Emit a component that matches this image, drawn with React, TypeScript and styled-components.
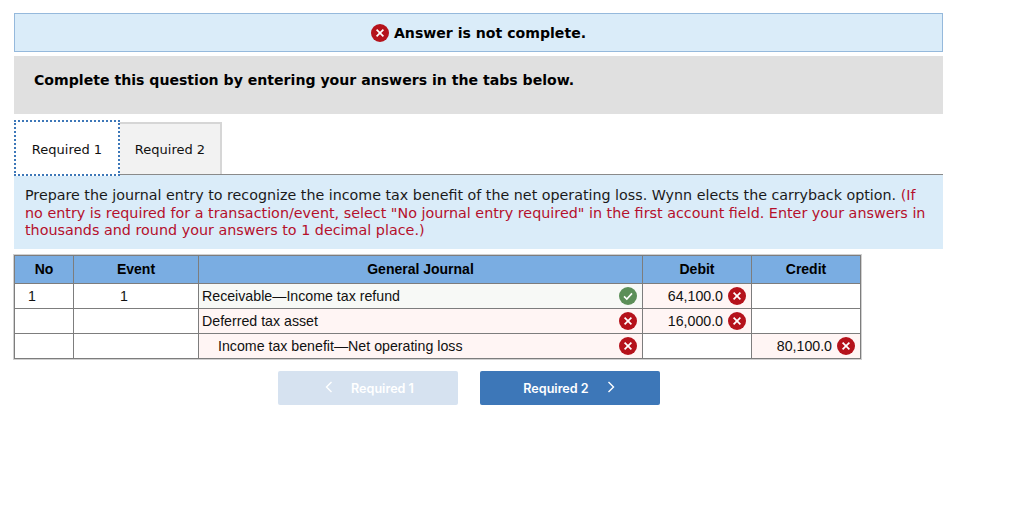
import { createGlobalStyle } from 'styled-components';
import styled from 'styled-components';

const GlobalStyle = createGlobalStyle`
  html, body { margin: 0; padding: 0; background: #fff; }
  body { font-family: "DejaVu Sans", Verdana, sans-serif; color: #000; }
`;

const Page = styled.div`
  width: 1024px;
  height: 508px;
  box-sizing: border-box;
  padding: 13px 0 0 14px;
  overflow: hidden;
`;

const Column = styled.div`
  width: 929px;
`;

const Alert = styled.div`
  height: 39px;
  box-sizing: border-box;
  background: #daecf9;
  border: 1px solid #95b9dc;
  display: flex;
  align-items: center;
  justify-content: center;
  gap: 5px;
  font-size: 14.1px;
  font-weight: 700;
`;

const Notice = styled.div`
  margin-top: 4px;
  height: 58px;
  box-sizing: border-box;
  background: #e0e0e0;
  padding: 15px 20px;
  font-size: 14.1px;
  font-weight: 700;
  line-height: 18px;
`;

const Tabs = styled.div`
  margin-top: 8px;
  height: 52px;
  display: flex;
  align-items: flex-end;
  border-bottom: 1px solid #8a8a8a;
`;

const Tab = styled.div<{ $active?: boolean }>`
  flex: none;
  box-sizing: border-box;
  display: flex;
  align-items: center;
  justify-content: center;
  font-size: 13px;
  color: #111;
  ${({ $active }) =>
    $active
      ? `
    width: 106px;
    height: 56px;
    margin-bottom: -2px;
    padding-top: 2px;
    background: #fff;
    border: 2px dotted #3d77b8;
    position: relative;
    z-index: 1;
  `
      : `
    width: 102px;
    height: 52px;
    background: #f2f2f2;
    border: 2px solid #d6d6d6;
    border-bottom: 0;
    border-left: 0;
  `}
`;

const Instructions = styled.div`
  background: #daecf9;
  height: 74px;
  box-sizing: border-box;
  padding: 12px 11px 0;
  font-size: 14.27px;
  line-height: 17.5px;
  color: #1a1a1a;
`;

const Hint = styled.span`
  color: #b5102c;
  font-size: 14.34px;
`;

const JournalTable = styled.table`
  margin-top: 6px;
  width: 846px;
  table-layout: fixed;
  border-collapse: collapse;
  font-family: "Liberation Sans", Arial, sans-serif;
  font-size: 14.2px;
  color: #111;
  outline: 1px solid #d0d0d0;
`;

const Head = styled.th<{ $w: number }>`
  width: ${({ $w }) => $w}px;
  height: 28px;
  padding: 0 0 1px;
  box-sizing: border-box;
  background: #7aade2;
  border: 1px solid #7d7d7d;
  font-weight: 700;
  font-size: 14px;
  color: #000;
  text-align: center;
`;

const Cell = styled.td<{ $tone?: 'ok' | 'bad' }>`
  height: 25px;
  padding: 0;
  box-sizing: border-box;
  border: 1px solid #7d7d7d;
  background: ${({ $tone }) =>
    $tone === 'ok' ? '#f7f9f6' : $tone === 'bad' ? '#fff5f4' : '#fff'};
`;

const IndexValue = styled.div<{ $pad: number }>`
  padding-left: ${({ $pad }) => $pad}px;
`;

const AccountRow = styled.div<{ $indent?: boolean }>`
  display: flex;
  align-items: center;
  justify-content: space-between;
  padding: 0 5px 0 ${({ $indent }) => ($indent ? 19 : 3)}px;
`;

const AmountRow = styled.div`
  display: flex;
  align-items: center;
  justify-content: flex-end;
  gap: 5px;
  padding-right: 5px;
`;

const Buttons = styled.div`
  margin: 12px 0 0 264px;
  display: flex;
  gap: 22px;
`;

const NavButton = styled.div<{ $disabled?: boolean }>`
  width: 180px;
  height: 34px;
  box-sizing: border-box;
  border-radius: 2px;
  display: flex;
  align-items: center;
  justify-content: center;
  padding: ${({ $disabled }) => ($disabled ? '0 0 0 3px' : '0 2px 0 0')};
  font-family: Inter, "Liberation Sans", sans-serif;
  font-size: 12.6px;
  font-weight: 600;
  color: #fff;
  background: ${({ $disabled }) => ($disabled ? '#d6e2f0' : '#3d77b8')};
`;

const Chevron = styled.svg<{ $side: 'left' | 'right' }>`
  width: 8px;
  height: 12px;
  margin: ${({ $side }) => ($side === 'left' ? '-2px 18px 0 0' : '-2px 0 0 18px')};
  fill: none;
  stroke: currentColor;
  stroke-width: 1.4;
`;

function StatusIcon({ ok }: { ok?: boolean }) {
  return (
    <svg width="18" height="18" viewBox="0 0 18 18" style={{ flex: 'none' }}>
      <circle cx="9" cy="9" r="9" fill={ok ? '#5b8f58' : '#b5121b'} />
      {ok ? (
        <path d="M5 9.4 L7.8 12 L13 6.4" fill="none" stroke="#fff" strokeWidth="1.6" />
      ) : (
        <path d="M5.6 5.6 L12.4 12.4 M12.4 5.6 L5.6 12.4" fill="none" stroke="#fff" strokeWidth="1.7" />
      )}
    </svg>
  );
}

const rows = [
  { no: '1', event: '1', account: 'Receivable—Income tax refund', accountOk: true, debit: '64,100.0', credit: '' },
  { no: '', event: '', account: 'Deferred tax asset', accountOk: false, debit: '16,000.0', credit: '' },
  { no: '', event: '', account: 'Income tax benefit—Net operating loss', accountOk: false, indent: true, debit: '', credit: '80,100.0' },
];

export default function App() {
  return (
    <Page>
      <GlobalStyle />
      <Column>
        <Alert>
          <StatusIcon />
          Answer is not complete.
        </Alert>
        <Notice>Complete this question by entering your answers in the tabs below.</Notice>
        <Tabs>
          <Tab $active>Required 1</Tab>
          <Tab>Required 2</Tab>
        </Tabs>
        <Instructions>
          Prepare the journal entry to recognize the income tax benefit of the net operating loss. Wynn elects the carryback option.{' '}
          <Hint>
            (If no entry is required for a transaction/event, select "No journal entry required" in the first account field. Enter your answers in thousands and round your answers to 1 decimal place.)
          </Hint>
        </Instructions>
        <JournalTable>
          <thead>
            <tr>
              <Head $w={59}>No</Head>
              <Head $w={125}>Event</Head>
              <Head $w={444}>General Journal</Head>
              <Head $w={109}>Debit</Head>
              <Head $w={109}>Credit</Head>
            </tr>
          </thead>
          <tbody>
            {rows.map((row) => (
              <tr key={row.account}>
                <Cell><IndexValue $pad={13}>{row.no}</IndexValue></Cell>
                <Cell><IndexValue $pad={46}>{row.event}</IndexValue></Cell>
                <Cell $tone={row.accountOk ? 'ok' : 'bad'}>
                  <AccountRow $indent={row.indent}>
                    {row.account}
                    <StatusIcon ok={row.accountOk} />
                  </AccountRow>
                </Cell>
                <Cell $tone={row.debit ? 'bad' : undefined}>
                  {row.debit && <AmountRow>{row.debit}<StatusIcon /></AmountRow>}
                </Cell>
                <Cell $tone={row.credit ? 'bad' : undefined}>
                  {row.credit && <AmountRow>{row.credit}<StatusIcon /></AmountRow>}
                </Cell>
              </tr>
            ))}
          </tbody>
        </JournalTable>
        <Buttons>
          <NavButton $disabled>
            <Chevron $side="left" viewBox="0 0 8 12"><path d="M6.5 1 L1.5 6 L6.5 11" /></Chevron>
            Required 1
          </NavButton>
          <NavButton>
            Required 2
            <Chevron $side="right" viewBox="0 0 8 12"><path d="M1.5 1 L6.5 6 L1.5 11" /></Chevron>
          </NavButton>
        </Buttons>
      </Column>
    </Page>
  );
}
